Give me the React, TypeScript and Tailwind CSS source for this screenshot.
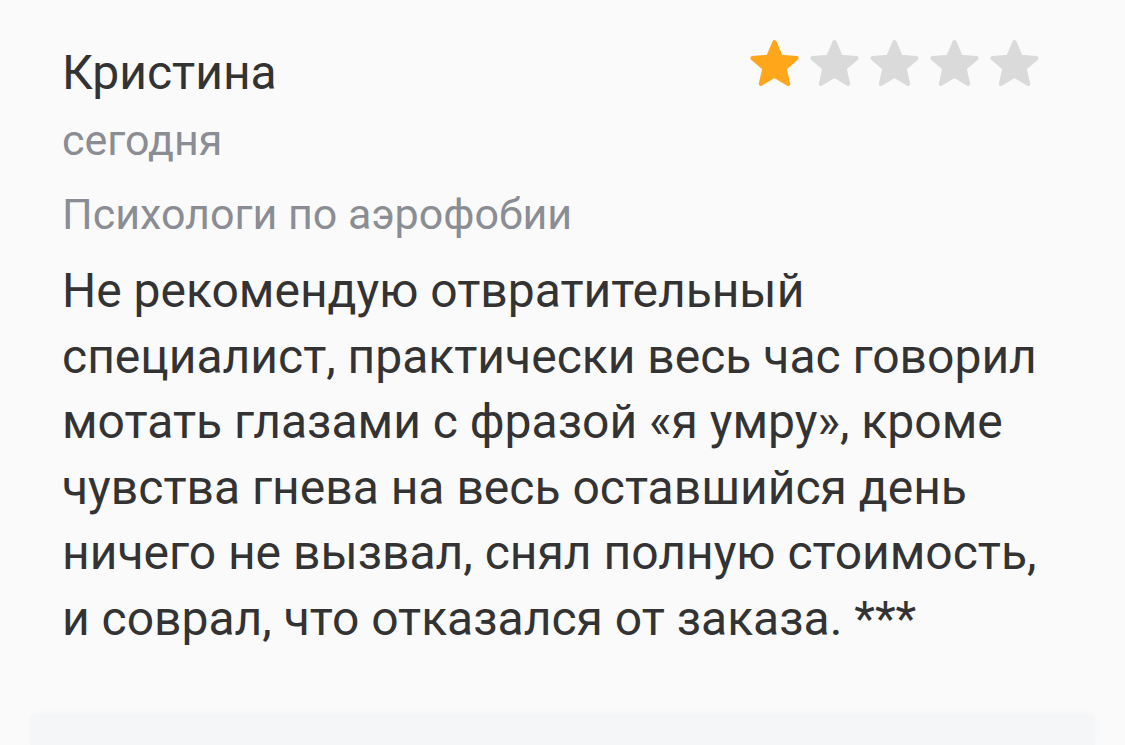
import React from "react";

function Star({ filled }: { filled: boolean }) {
  const color = filled ? "#ffa61a" : "#dadada";
  return (
    <svg width="51" height="49" viewBox="0 0 50 48" className="block">
      <polygon
        points="25,3 31.2,17.4 46.6,18.7 34.9,28.8 38.4,44 25,36 11.6,44 15.1,28.8 3.4,18.7 18.8,17.4"
        fill={color}
        stroke={color}
        strokeWidth={4}
        strokeLinejoin="round"
      />
    </svg>
  );
}

export default function App() {
  return (
    <div
      className="w-[1125px] h-[745px] bg-[#fafafa] overflow-hidden flex flex-col"
      style={{ fontFamily: "Roboto, 'Noto Sans', sans-serif" }}
    >
      <div className="pl-[62px] pr-[85px] pt-[45px] flex-1">
        <div className="flex items-start justify-between">
          <div className="text-[48px] leading-[56px] text-[#333333]">Кристина</div>
          <div className="flex gap-[9px] mt-[-6px]">
            <Star filled />
            <Star filled={false} />
            <Star filled={false} />
            <Star filled={false} />
            <Star filled={false} />
          </div>
        </div>
        <div className="text-[43px] leading-[50px] mt-[14px] text-[#8b8d94]">сегодня</div>
        <div className="text-[43px] leading-[50px] mt-[24px] text-[#8b8d94]">
          Психологи по аэрофобии
        </div>
        <p className="text-[48px] leading-[65.6px] mt-[19px] text-[#333333] w-[1000px]">
          Не рекомендую отвратительный специалист, практически весь час говорил мотать
          глазами с фразой «я умру», кроме чувства гнева на весь оставшийся день ничего не
          вызвал, снял полную стоимость, и соврал, что отказался от заказа. ***
        </p>
      </div>
      <div className="mx-[30px] h-[31px] rounded-t-[6px] bg-[#f5f6f8] shadow-[0_-1px_6px_rgba(0,0,0,0.02)] shrink-0" />
    </div>
  );
}
